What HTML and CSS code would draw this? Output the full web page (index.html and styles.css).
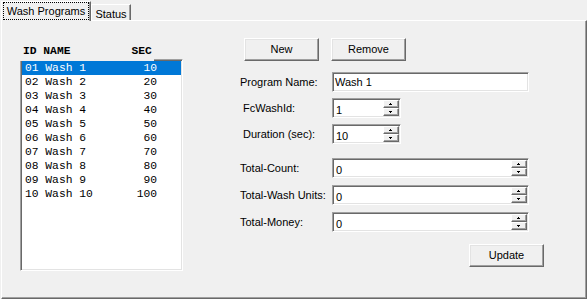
FILE: index.html
```html
<!DOCTYPE html>
<html>
<head>
<meta charset="utf-8">
<link rel="stylesheet" href="styles.css">
</head>
<body>
<div class="tabs">
  <div class="tab active"><span class="focus">Wash Programs</span></div>
  <div class="tab">Status</div>
</div>
<div class="page">
  <div class="left">
    <div class="list-head">ID NAME         SEC</div>
    <div class="listbox">
      <div class="row sel"><span>01 Wash 1</span><span class="sec">10</span></div>
      <div class="row"><span>02 Wash 2</span><span class="sec">20</span></div>
      <div class="row"><span>03 Wash 3</span><span class="sec">30</span></div>
      <div class="row"><span>04 Wash 4</span><span class="sec">40</span></div>
      <div class="row"><span>05 Wash 5</span><span class="sec">50</span></div>
      <div class="row"><span>06 Wash 6</span><span class="sec">60</span></div>
      <div class="row"><span>07 Wash 7</span><span class="sec">70</span></div>
      <div class="row"><span>08 Wash 8</span><span class="sec">80</span></div>
      <div class="row"><span>09 Wash 9</span><span class="sec">90</span></div>
      <div class="row"><span>10 Wash 10</span><span class="sec">100</span></div>
    </div>
  </div>
  <div class="right">
    <div class="btn-row">
      <div class="btn new">New</div>
      <div class="btn remove">Remove</div>
    </div>
    <div class="form">
      <div class="frow">
        <div class="label">Program Name:</div>
        <div class="box wide"><span class="val txt">Wash 1</span></div>
      </div>
      <div class="frow">
        <div class="label ind">FcWashId:</div>
        <div class="box small"><span class="val">1</span>
          <div class="spin">
            <div class="sb"><svg width="3" height="2" viewBox="0 0 3 2"><rect x="1" y="0" width="1" height="1"/><rect x="0" y="1" width="3" height="1"/></svg></div>
            <div class="sb"><svg width="3" height="2" viewBox="0 0 3 2"><rect x="0" y="0" width="3" height="1"/><rect x="1" y="1" width="1" height="1"/></svg></div>
          </div>
        </div>
      </div>
      <div class="frow">
        <div class="label ind">Duration (sec):</div>
        <div class="box small"><span class="val">10</span>
          <div class="spin">
            <div class="sb"><svg width="3" height="2" viewBox="0 0 3 2"><rect x="1" y="0" width="1" height="1"/><rect x="0" y="1" width="3" height="1"/></svg></div>
            <div class="sb"><svg width="3" height="2" viewBox="0 0 3 2"><rect x="0" y="0" width="3" height="1"/><rect x="1" y="1" width="1" height="1"/></svg></div>
          </div>
        </div>
      </div>
      <div class="frow gap-top">
        <div class="label">Total-Count:</div>
        <div class="box wide"><span class="val">0</span>
          <div class="spin">
            <div class="sb"><svg width="3" height="2" viewBox="0 0 3 2"><rect x="1" y="0" width="1" height="1"/><rect x="0" y="1" width="3" height="1"/></svg></div>
            <div class="sb"><svg width="3" height="2" viewBox="0 0 3 2"><rect x="0" y="0" width="3" height="1"/><rect x="1" y="1" width="1" height="1"/></svg></div>
          </div>
        </div>
      </div>
      <div class="frow t2">
        <div class="label">Total-Wash Units:</div>
        <div class="box wide"><span class="val">0</span>
          <div class="spin">
            <div class="sb"><svg width="3" height="2" viewBox="0 0 3 2"><rect x="1" y="0" width="1" height="1"/><rect x="0" y="1" width="3" height="1"/></svg></div>
            <div class="sb"><svg width="3" height="2" viewBox="0 0 3 2"><rect x="0" y="0" width="3" height="1"/><rect x="1" y="1" width="1" height="1"/></svg></div>
          </div>
        </div>
      </div>
      <div class="frow t2">
        <div class="label">Total-Money:</div>
        <div class="box wide"><span class="val">0</span>
          <div class="spin">
            <div class="sb"><svg width="3" height="2" viewBox="0 0 3 2"><rect x="1" y="0" width="1" height="1"/><rect x="0" y="1" width="3" height="1"/></svg></div>
            <div class="sb"><svg width="3" height="2" viewBox="0 0 3 2"><rect x="0" y="0" width="3" height="1"/><rect x="1" y="1" width="1" height="1"/></svg></div>
          </div>
        </div>
      </div>
    </div>
    <div class="btn update">Update</div>
  </div>
</div>
</body>
</html>
```

FILE: styles.css
```css
html, body {
  margin: 0;
  padding: 0;
  background: #f0f0f0;
  width: 587px;
  height: 299px;
  overflow: hidden;
}
body {
  padding-left: 1px;
  font-family: "Liberation Sans", Arial, sans-serif;
  font-size: 11px;
  color: #000;
  box-sizing: border-box;
}
.tabs {
  display: flex;
  align-items: flex-end;
  height: 20px;
  padding-top: 1px;
  box-sizing: border-box;
}
.tab {
  box-sizing: border-box;
  background: #f0f0f0;
  border-top: 1px solid #fff;
  border-left: 1px solid #fff;
  border-right: 1px solid #696969;
  box-shadow: inset -1px 0 #a0a0a0;
}
.tab.active {
  width: 90px;
  height: 20px;
  margin-bottom: -1px;
  position: relative;
  z-index: 1;
  padding: 0 1px 0 1px;
}
.focus {
  display: block;
  box-sizing: border-box;
  height: 18px;
  border: 1px dotted #000;
  text-align: center;
  line-height: 16px;
}
.tab:not(.active) {
  width: 40px;
  height: 16px;
  text-align: center;
  line-height: 16px;
  padding-top: 1px;
}
.page {
  box-sizing: border-box;
  width: 586px;
  height: 279px;
  border-top: 1px solid #fff;
  border-left: 1px solid #fff;
  border-right: 1px solid #696969;
  border-bottom: 1px solid #696969;
  box-shadow: inset -1px -1px #a0a0a0;
  display: flex;
  padding-left: 18px;
}
.left {
  width: 163px;
  margin-top: 22px;
}
.list-head {
  position: relative;
  z-index: 1;
  width: 134px;
  height: 18px;
  margin-bottom: -2px;
  padding-left: 3px;
  padding-bottom: 2px;
  box-sizing: border-box;
  background: #f0f0f0;
  font-family: "Liberation Mono", "Courier New", monospace;
  font-size: 11.3px;
  font-weight: bold;
  line-height: 16px;
  white-space: pre;
}
.listbox {
  box-sizing: border-box;
  width: 163px;
  height: 212px;
  background: #fff;
  border-top: 1px solid #a0a0a0;
  border-left: 1px solid #a0a0a0;
  border-right: 1px solid #fff;
  border-bottom: 1px solid #fff;
  box-shadow: inset 1px 1px #696969, inset -1px -1px #e3e3e3;
  padding: 1px;
}
.row {
  display: flex;
  height: 14px;
  line-height: 14px;
  padding-left: 3px;
  padding-right: 24px;
  font-family: "Liberation Mono", "Courier New", monospace;
  font-size: 11.3px;
  white-space: pre;
}
.row .sec {
  margin-left: auto;
}
.row.sel {
  background: #0078d7;
  color: #fff;
}
.right {
  margin-left: 57px;
  margin-top: 17px;
  display: flex;
  flex-direction: column;
}
.btn-row {
  display: flex;
  margin-left: 4px;
}
.btn {
  box-sizing: border-box;
  width: 75px;
  height: 23px;
  background: #f0f0f0;
  border-top: 1px solid #fff;
  border-left: 1px solid #fff;
  border-right: 1px solid #696969;
  border-bottom: 1px solid #696969;
  box-shadow: inset -1px -1px #a0a0a0, inset 1px 1px #e3e3e3;
  text-align: center;
  line-height: 21px;
}
.btn.remove {
  margin-left: 12px;
}
.form {
  margin-top: 11px;
  display: flex;
  flex-direction: column;
  gap: 6px;
}
.frow {
  display: flex;
  align-items: center;
  height: 20px;
}
.frow.gap-top {
  margin-top: 8px;
}
.frow.t2 {
  margin-top: 1px;
}
.label {
  width: 92px;
  white-space: nowrap;
}
.label.ind {
  padding-left: 3px;
  box-sizing: border-box;
}
.box {
  box-sizing: border-box;
  height: 20px;
  background: #fff;
  border-top: 1px solid #a0a0a0;
  border-left: 1px solid #a0a0a0;
  border-right: 1px solid #fff;
  border-bottom: 1px solid #fff;
  box-shadow: inset 1px 1px #696969, inset -1px -1px #e3e3e3;
  display: flex;
  padding: 1px;
}
.box.wide {
  width: 197px;
}
.box.small {
  width: 69px;
}
.val {
  flex: 1;
  padding-left: 2px;
  padding-top: 3px;
  line-height: 14px;
}
.val.txt {
  padding-left: 1px;
  padding-top: 1px;
}
.spin {
  width: 16px;
  display: flex;
  flex-direction: column;
}
.sb {
  box-sizing: border-box;
  height: 8px;
  background: #f0f0f0;
  border-top: 1px solid #fff;
  border-left: 1px solid #fff;
  border-right: 1px solid #696969;
  border-bottom: 1px solid #696969;
  box-shadow: inset -1px -1px #a0a0a0;
  display: flex;
  align-items: center;
  justify-content: center;
}
.sb svg {
  display: block;
  fill: #000;
  margin-right: 1px;
}
.btn.update {
  margin-top: 12px;
  margin-left: 229px;
}
```
